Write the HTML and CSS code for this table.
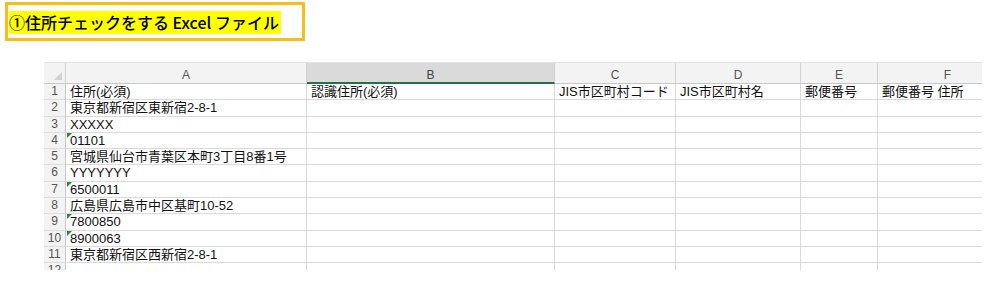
FILE: index.html
```html
<!DOCTYPE html>
<html lang="ja">
<head>
<meta charset="utf-8">
<link rel="stylesheet" href="styles.css">
</head>
<body>
<div class="title-box"><span class="title">①住所チェックをする Excel ファイル</span></div>
<div class="sheet-wrap">
  <div class="sheet">
    <div class="hd corner"><span class="sel-all"></span></div>
    <div class="hd col">A</div>
    <div class="hd col active">B</div>
    <div class="hd col">C</div>
    <div class="hd col">D</div>
    <div class="hd col">E</div>
    <div class="hd col">F</div>

    <div class="rn">1</div><div class="c">住所(必須)</div><div class="c">認識住所(必須)</div><div class="c">JIS市区町村コード</div><div class="c">JIS市区町村名</div><div class="c">郵便番号</div><div class="c">郵便番号 住所</div>
    <div class="rn">2</div><div class="c">東京都新宿区東新宿2-8-1</div><div class="c"></div><div class="c"></div><div class="c"></div><div class="c"></div><div class="c"></div>
    <div class="rn">3</div><div class="c">XXXXX</div><div class="c"></div><div class="c"></div><div class="c"></div><div class="c"></div><div class="c"></div>
    <div class="rn">4</div><div class="c flag">01101</div><div class="c"></div><div class="c"></div><div class="c"></div><div class="c"></div><div class="c"></div>
    <div class="rn">5</div><div class="c">宮城県仙台市青葉区本町3丁目8番1号</div><div class="c"></div><div class="c"></div><div class="c"></div><div class="c"></div><div class="c"></div>
    <div class="rn">6</div><div class="c">YYYYYYY</div><div class="c"></div><div class="c"></div><div class="c"></div><div class="c"></div><div class="c"></div>
    <div class="rn">7</div><div class="c flag">6500011</div><div class="c"></div><div class="c"></div><div class="c"></div><div class="c"></div><div class="c"></div>
    <div class="rn">8</div><div class="c">広島県広島市中区基町10-52</div><div class="c"></div><div class="c"></div><div class="c"></div><div class="c"></div><div class="c"></div>
    <div class="rn">9</div><div class="c flag">7800850</div><div class="c"></div><div class="c"></div><div class="c"></div><div class="c"></div><div class="c"></div>
    <div class="rn">10</div><div class="c flag">8900063</div><div class="c"></div><div class="c"></div><div class="c"></div><div class="c"></div><div class="c"></div>
    <div class="rn">11</div><div class="c">東京都新宿区西新宿2-8-1</div><div class="c"></div><div class="c"></div><div class="c"></div><div class="c"></div><div class="c"></div>
    <div class="rn">12</div><div class="c"></div><div class="c"></div><div class="c"></div><div class="c"></div><div class="c"></div><div class="c"></div>
  </div>
</div>
</body>
</html>
```

FILE: styles.css
```css
html, body {
  margin: 0;
  padding: 0;
  background: #ffffff;
}
body {
  width: 987px;
  height: 288px;
  overflow: hidden;
  font-family: "Noto Sans CJK JP", "Noto Sans", sans-serif;
}
.title-box {
  box-sizing: border-box;
  margin: 2px 0 0 5px;
  width: 300px;
  height: 39px;
  border: 3px solid #fbbd12;
  padding: 5px 0 0 1px;
}
.title {
  display: inline-block;
  background: #ffff00;
  color: #000;
  font-size: 16px;
  font-weight: 500;
  line-height: 23px;
  padding-right: 2px;
  letter-spacing: 0;
}
.sheet-wrap {
  margin: 21px 0 0 44px;
  width: 938px;
  height: 207px;
  overflow: hidden;
  border-top: 1px solid #e4e4e4;
}
.sheet {
  display: grid;
  grid-template-columns: 22px 241px 248px 121px 125px 77px 140px;
  grid-template-rows: 21px repeat(12, 16.3px);
}
.hd {
  background: #f3f3f3;
  border-right: 1px solid #d0d0d0;
  border-bottom: 1px solid #c8c8c8;
  font-family: "Liberation Sans", "Noto Sans", sans-serif;
  font-size: 12px;
  color: #555;
  text-align: center;
  line-height: 14px;
  padding-top: 5px;
  box-sizing: border-box;
}
.hd.active {
  background: #dadada;
  border-bottom: 2px solid #217346;
  color: #444;
}
.corner {
  position: relative;
}
.sel-all {
  position: absolute;
  right: 3px;
  bottom: 3px;
  width: 0;
  height: 0;
  border-left: 8px solid transparent;
  border-bottom: 8px solid #d2d2d2;
}
.rn {
  background: #f3f3f3;
  border-right: 1px solid #c8c8c8;
  border-bottom: 1px solid #dcdcdc;
  font-family: "Liberation Sans", "Noto Sans", sans-serif;
  font-size: 12px;
  color: #555;
  text-align: center;
  line-height: 15px;
  overflow: hidden;
}
.c {
  position: relative;
  border-right: 1px solid #dadada;
  border-bottom: 1px solid #dadada;
  font-family: "Liberation Sans", "Noto Sans CJK JP", sans-serif;
  font-size: 13px;
  line-height: 15px;
  color: #111;
  padding-left: 4px;
  white-space: nowrap;
  overflow: visible;
}
.c.flag::before {
  content: "";
  position: absolute;
  left: 1px;
  top: 0;
  width: 0;
  height: 0;
  border-top: 5px solid #1f8a3a;
  border-right: 5px solid transparent;
}
```
